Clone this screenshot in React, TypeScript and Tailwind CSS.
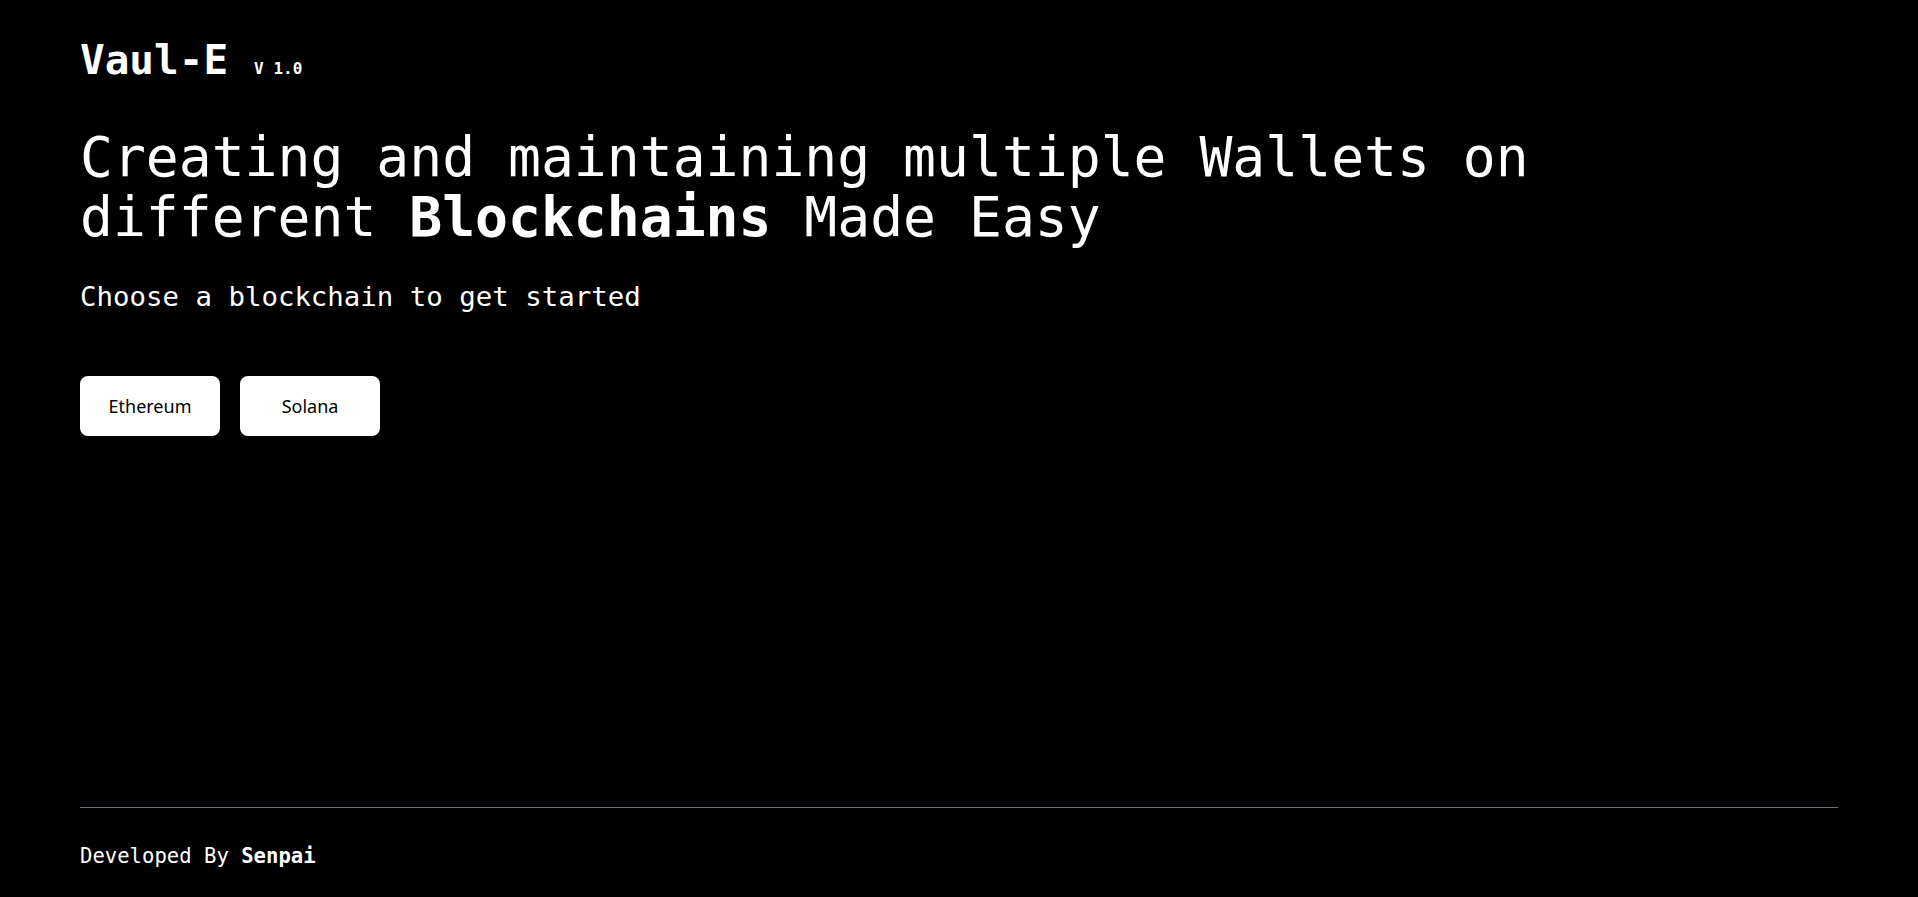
import React from 'react'

const chains = ['Ethereum', 'Solana']

export default function App() {
  return (
    <div className="flex min-h-screen flex-col bg-black px-20 text-white font-['DejaVu_Sans_Mono',monospace]">
      {/* Header */}
      <div className="flex items-baseline pt-10">
        <h1 className="text-[41px] font-bold leading-none">Vaul-E</h1>
        <span className="ml-[26px] text-[16px] font-bold leading-none">V 1.0</span>
      </div>

      {/* Hero */}
      <h2 className="mt-[46px] text-[54.7px] leading-[60px]">
        Creating and maintaining multiple Wallets on
        <br />
        different <span className="font-bold">Blockchains</span> Made Easy
      </h2>
      <p className="mt-8 text-[27.4px] leading-9">Choose a blockchain to get started</p>

      <div className="mt-[61px] flex gap-5">
        {chains.map((chain) => (
          <button
            key={chain}
            className="flex h-[60px] w-[140px] items-center justify-center rounded-lg bg-white text-[18px] text-black font-['Noto_Sans',sans-serif]"
          >
            {chain}
          </button>
        ))}
      </div>

      {/* Footer */}
      <div className="mt-auto border-t border-[#6b7280] pt-[34px] pb-[27px]">
        <p className="text-[20.6px] leading-7">
          Developed By <span className="font-bold">Senpai</span>
        </p>
      </div>
    </div>
  )
}
